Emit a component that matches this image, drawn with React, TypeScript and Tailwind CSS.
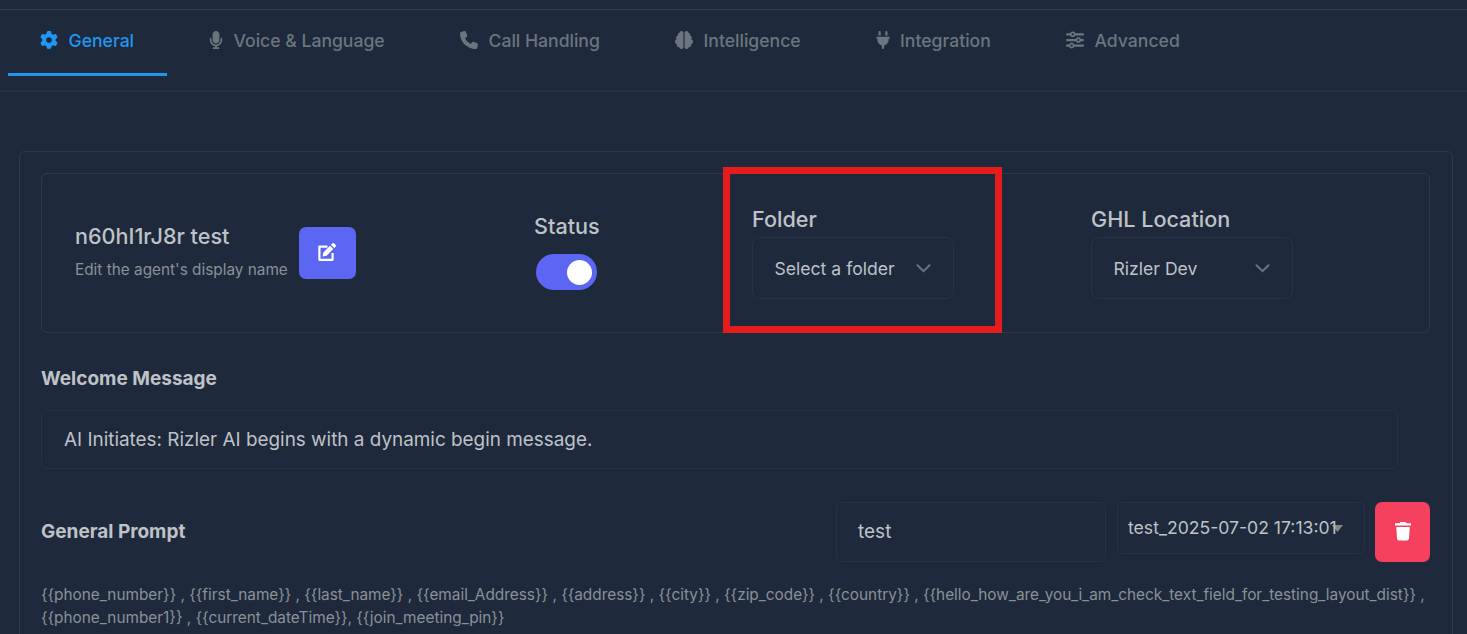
import type { ReactNode } from "react";
import { FaGear, FaMicrophone, FaPhone, FaBrain, FaPlug, FaSliders } from "react-icons/fa6";

function Tab({ icon, label, className, active }: { icon: ReactNode; label: string; className: string; active?: boolean }) {
  return (
    <div
      className={`flex h-[66px] shrink-0 items-start pt-[20px] leading-[22px] ${className} ${
        active ? "border-b-[3px] border-[#2196f3] text-[#2196f3]" : "text-[#6c757d]"
      }`}
    >
      <span className="mr-[10.5px] flex h-[20px] items-center text-[18px]">{icon}</span>
      <span className="text-[17.6px] font-medium whitespace-nowrap">{label}</span>
    </div>
  );
}

function EditIcon() {
  return (
    <svg className="h-[20px] w-[20px]" viewBox="0 0 20 20" fill="none">
      <path d="M10.5 4.6H2.4V17.8H15.6V11" stroke="currentColor" strokeWidth="2.2" strokeLinejoin="round" />
      <path d="M5.6 14.4 6.3 10.4 13 3.7 16.3 7 9.6 13.7ZM13.9 2.8 15.1 1.5Q16.2.6 17.3 1.5L18.4 2.6Q19.4 3.8 18.4 4.9L17.2 6.1Z" fill="currentColor" />
    </svg>
  );
}

function TrashIcon() {
  return (
    <svg className="h-[20px] w-[18px]" viewBox="0 0 18 20" fill="currentColor">
      <path d="M1 2.2H5.6L6.4 1H11.6L12.4 2.2H17V4.6H1ZM2.3 6H15.7L15 17.6Q14.9 19.4 13.2 19.4H4.8Q3.1 19.4 3 17.6Z" />
    </svg>
  );
}

function SelectField({ label, value }: { label: string; value: string }) {
  return (
    <div className="w-[202px]">
      <div className="h-[30px] text-[21.6px] leading-[26px] font-medium whitespace-nowrap">{label}</div>
      <div className="mt-[1px] flex h-[62px] items-center justify-between rounded-[8px] border border-[#283446] pt-px pr-[22px] pl-[21.5px] text-[17.6px] whitespace-nowrap">
        <span className="pt-[2px]">{value}</span>
        <svg className="h-[9px] w-[15px] text-[#6c757d]" viewBox="0 0 15 9" fill="none" stroke="currentColor" strokeWidth="2">
          <path d="M1.5 1.2 7.5 7.2 13.5 1.2" strokeLinecap="round" />
        </svg>
      </div>
    </div>
  );
}

export default function App() {
  return (
    <div className="h-[634px] w-[1467px] overflow-hidden bg-[#1e293b] font-[Inter,sans-serif] text-[#bfc2c7]">
      <nav className="mt-[9px] flex h-[83px] border-t border-b-2 border-t-[#334050] border-b-[#273344] pl-[8px]">
        <Tab active icon={<FaGear />} label="General" className="w-[159px] pl-[32px]" />
        <Tab icon={<FaMicrophone />} label="Voice & Language" className="w-[252px] pl-[40px] [&>span:first-child]:mr-[8.5px] [&>span:first-child]:w-[18px] [&>span:first-child]:justify-center" />
        <Tab icon={<FaPhone />} label="Call Handling" className="w-[216px] pl-[41px]" />
        <Tab icon={<FaBrain />} label="Intelligence" className="w-[200px] pl-[40px]" />
        <Tab icon={<FaPlug />} label="Integration" className="w-[190px] pl-[39px] [&>span:first-child]:mr-[8px]" />
        <Tab icon={<FaSliders />} label="Advanced" className="w-[200px] pl-[41px]" />
      </nav>

      <main className="mt-[59px] ml-[19px] h-[500px] w-[1434px] rounded-[6px] border border-[#2e3a4a] px-[21px] pt-[21px]">
        <section className="flex h-[160px] w-[1389px] rounded-[6px] border border-[#2e3a4a]">
          <div className="flex w-[492px] pt-[48px] pl-[33px]">
            <div className="w-[224px]">
              <div className="text-[21.6px] leading-[28px] font-medium whitespace-nowrap">n60hI1rJ8r test</div>
              <div className="mt-[8px] text-[15.35px] leading-[24px] whitespace-nowrap text-[#8b9097]">Edit the agent's display name</div>
            </div>
            <button className="mt-[5px] flex h-[52px] w-[57px] items-center justify-center rounded-[7px] bg-[#5b67f3] pr-[2px] pb-[2px] text-white">
              <EditIcon />
            </button>
          </div>
          <div className="w-[189px] pt-[38px]">
            <div className="text-[21.6px] leading-[28px] font-medium">Status</div>
            <div className="mt-[14px] ml-[2px] flex h-[36px] w-[61px] items-center justify-end rounded-full bg-[#5b67f3] pr-[5px]">
              <span className="h-[25px] w-[25px] rounded-full bg-white" />
            </div>
          </div>
          <div className="relative w-[368px]">
            <div className="absolute -top-[7px] left-0 h-[166px] w-[279px] border-[7px] border-[#e51c1c]" />
            <div className="pt-[32px] pl-[29px]">
              <SelectField label="Folder" value="Select a folder" />
            </div>
          </div>
          <div className="pt-[32px]">
            <SelectField label="GHL Location" value="Rizler Dev" />
          </div>
        </section>

        <h2 className="mt-[32px] text-[19px] leading-[28px] font-bold">Welcome Message</h2>
        <div className="mt-[17px] flex h-[59px] w-[1357px] items-center rounded-[6px] border border-[#273344] pt-[2px] pl-[22px] text-[18.9px]">
          AI Initiates: Rizler AI begins with a dynamic begin message.
        </div>

        <div className="mt-[33px] flex h-[60px] w-[1389px] items-start">
          <h2 className="w-[795px] pt-[16px] text-[19px] leading-[28px] font-bold">General Prompt</h2>
          <div className="flex h-[60px] w-[270px] items-center rounded-[6px] border border-[#273344] pl-[21px] text-[19px]">test</div>
          <div className="relative ml-[11px] flex h-[52px] w-[248px] items-center rounded-[6px] border border-[#273344] pl-[10px] text-[17.6px] whitespace-nowrap">
            <svg className="absolute top-[22px] right-[21px] h-[7px] w-[11px]" viewBox="0 0 11 7">
              <path d="M0 0H11L5.5 7Z" fill="#858585" />
            </svg>
            <span className="relative">test_2025-07-02 17:13:01</span>
          </div>
          <button className="ml-[10px] flex h-[60px] w-[55px] items-center justify-center rounded-[7px] bg-[#f5405e] pb-[2px] text-white">
            <TrashIcon />
          </button>
        </div>

        <div className="mt-[21px] text-[15.37px] leading-[23px] whitespace-nowrap text-[#8b9097]">
          <p>{"{{phone_number}} , {{first_name}} , {{last_name}} , {{email_Address}} , {{address}} , {{city}} , {{zip_code}} , {{country}} , {{hello_how_are_you_i_am_check_text_field_for_testing_layout_dist}} ,"}</p>
          <p>{"{{phone_number1}} , {{current_dateTime}}, {{join_meeting_pin}}"}</p>
        </div>
      </main>
    </div>
  );
}
